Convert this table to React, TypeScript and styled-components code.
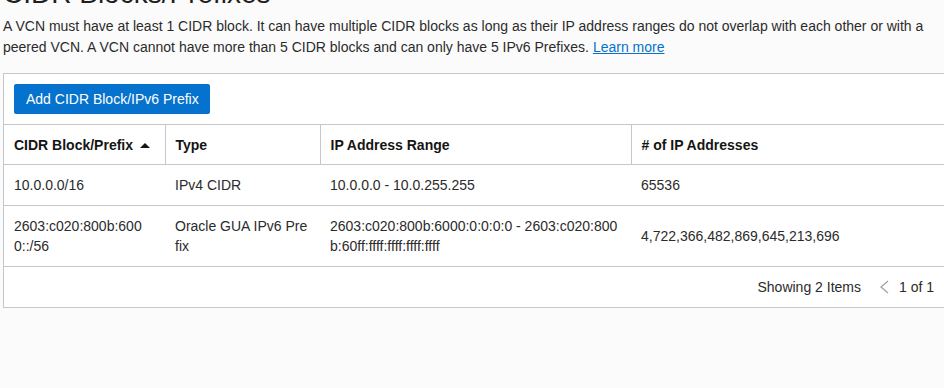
import React from "react";
import styled, { createGlobalStyle } from "styled-components";

const Global = createGlobalStyle`
  html, body { margin: 0; padding: 0; background: #fbfbfb; overflow: hidden; }
  body { font-family: "Liberation Sans", Arial, sans-serif; color: #2b2b2b; }
`;

const Page = styled.div`
  width: 942px;
  margin-left: 3px;
`;

const Heading = styled.h2`
  margin: -22px 0 0;
  font-size: 28px;
  line-height: 32px;
  font-weight: normal;
  color: #1f1f1f;
`;

const Description = styled.p`
  margin: 6px 0 15px;
  font-size: 14px;
  line-height: 21px;
  color: #2b2b2b;
`;

const Link = styled.a`
  color: #0572ce;
  text-decoration: underline;
`;

const Panel = styled.div`
  background: #ffffff;
  border: 1px solid #c4c8cc;
`;

const Toolbar = styled.div`
  display: flex;
  padding: 10px;
`;

const PrimaryButton = styled.button`
  height: 30px;
  padding: 0 11px 0 12px;
  background: #0572ce;
  color: #ffffff;
  border: none;
  border-radius: 2px;
  font-family: "Liberation Sans", Arial, sans-serif;
  font-size: 14px;
`;

const Table = styled.table`
  width: 100%;
  border-collapse: collapse;
  table-layout: fixed;
  font-size: 14px;
`;

const HeadCell = styled.th<{ $w?: number; $first?: boolean }>`
  box-sizing: border-box;
  width: ${(p) => (p.$w ? `${p.$w}px` : "auto")};
  height: 40px;
  padding: 0 10px;
  text-align: left;
  font-weight: bold;
  color: #161513;
  border-top: 1px solid #c4c8cc;
  border-bottom: 1px solid #c4c8cc;
  border-left: ${(p) => (p.$first ? "none" : "1px solid #c4c8cc")};
  line-height: 20px;
`;

const SortArrow = styled.span`
  display: inline-block;
  margin-left: 7px;
  width: 0;
  height: 0;
  border-left: 5px solid transparent;
  border-right: 5px solid transparent;
  border-bottom: 5px solid #161513;
  vertical-align: 2px;
`;

const Row = styled.tr`
  border-bottom: 1px solid #c4c8cc;
`;

const Cell = styled.td`
  padding: 10px 10px;
  line-height: 20px;
  vertical-align: middle;
  word-break: break-all;
  color: #2b2b2b;
`;

const Footer = styled.div`
  height: 40px;
  display: flex;
  align-items: center;
  justify-content: flex-end;
  padding: 0 10px;
  font-size: 14px;
  color: #2b2b2b;
`;

const Pager = styled.div`
  display: flex;
  align-items: center;
  margin-left: 18px;
  gap: 10px;
`;

const Chevron = () => (
  <svg width="10" height="14" viewBox="0 0 10 14">
    <polyline points="9,1 2,7 9,13" fill="none" stroke="#a3a3a3" strokeWidth="1.3" />
  </svg>
);

const rows = [
  ["10.0.0.0/16", "IPv4 CIDR", "10.0.0.0 - 10.0.255.255", "65536"],
  [
    "2603:c020:800b:6000::/56",
    "Oracle GUA IPv6 Prefix",
    "2603:c020:800b:6000:0:0:0:0 - 2603:c020:800b:60ff:ffff:ffff:ffff:ffff",
    "4,722,366,482,869,645,213,696",
  ],
];

export default function App() {
  return (
    <>
      <Global />
      <Page>
        <Heading>CIDR Blocks/Prefixes</Heading>
        <Description>
          A VCN must have at least 1 CIDR block. It can have multiple CIDR blocks as long as their IP
          address ranges do not overlap with each other or with a peered VCN. A VCN cannot have more
          than 5 CIDR blocks and can only have 5 IPv6 Prefixes. <Link href="#">Learn more</Link>
        </Description>
        <Panel>
          <Toolbar>
            <PrimaryButton>Add CIDR Block/IPv6 Prefix</PrimaryButton>
          </Toolbar>
          <Table>
            <thead>
              <tr>
                <HeadCell $w={161} $first>
                  CIDR Block/Prefix
                  <SortArrow />
                </HeadCell>
                <HeadCell $w={155}>Type</HeadCell>
                <HeadCell $w={311}>IP Address Range</HeadCell>
                <HeadCell># of IP Addresses</HeadCell>
              </tr>
            </thead>
            <tbody>
              {rows.map((r) => (
                <Row key={r[0]}>
                  {r.map((c) => (
                    <Cell key={c}>{c}</Cell>
                  ))}
                </Row>
              ))}
            </tbody>
          </Table>
          <Footer>
            <span>Showing 2 Items</span>
            <Pager>
              <Chevron />
              <span>1 of 1</span>
            </Pager>
          </Footer>
        </Panel>
      </Page>
    </>
  );
}
